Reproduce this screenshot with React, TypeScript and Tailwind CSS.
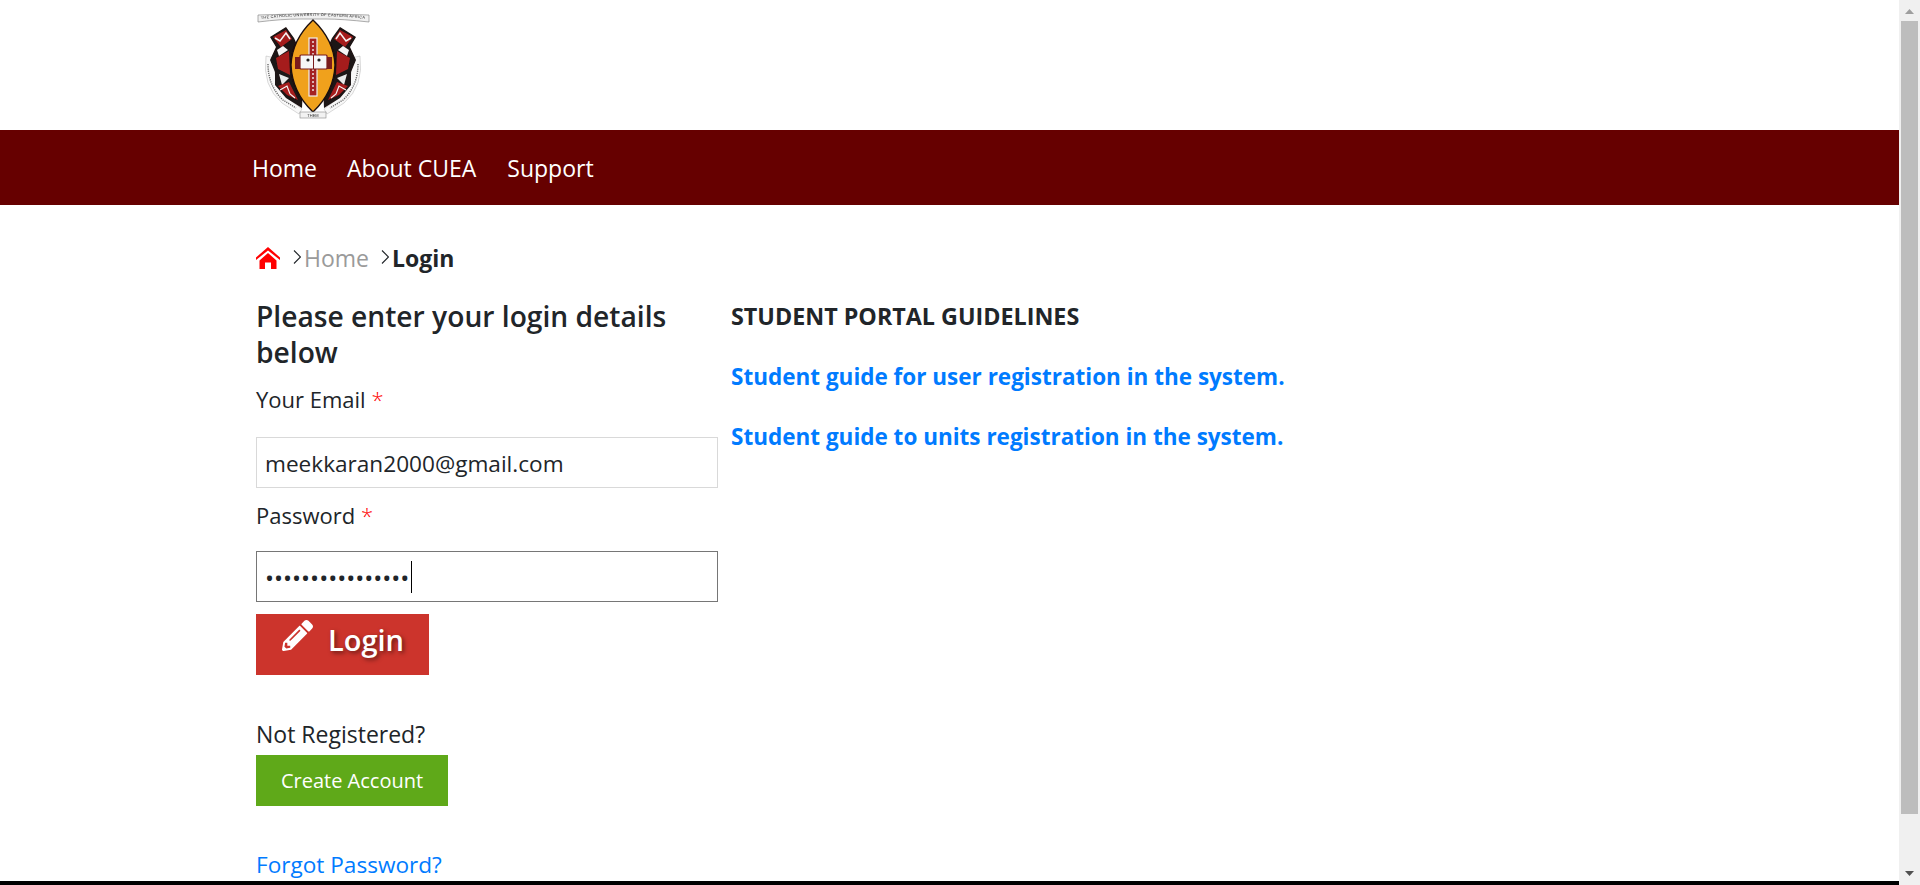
import { FaPencilAlt } from "react-icons/fa";

const font = "font-['Open_Sans','Noto_Sans',sans-serif]";

function LogoWing() {
    return (
        <g>
            <path d="M24 56 Q20 86 40 103 L57 114 L60 109 L44 97 Q30 84 33 58 Z" fill="#f8f8f8" stroke="#b4b4b4" strokeWidth="0.5" />
            <path d="M26 64 Q26 86 41 100 L54 108" fill="none" stroke="#666" strokeWidth="1.4" strokeDasharray="1.2 1" />
            <path d="M52 38 L44 27 L28 37 L34 47 L28 60 L33 72 L33 85 L44 98 L60 108 L62 60 Z" fill="#1c1212" />
            <path d="M31 37 L44 30 L50 39 L39 47 Z" fill="#a51e1e" />
            <path d="M33 38 L38 41 L44 33 L48 39" fill="none" stroke="#f5f5f5" strokeWidth="1.5" />
            <path d="M35 50 L41 46 L46 50 L37 56 Z" fill="#f5f5f5" />
            <path d="M34 58 L47 51 L48 75 L36 69 Z" fill="#a51e1e" />
            <path d="M37 74 L47 78 L40 85 Z" fill="#e8e8e8" />
            <path d="M36 86 L47 82 L56 100 L45 95 Z" fill="#a51e1e" />
            <path d="M38 90 L45 86 L48 94 L53 98" fill="none" stroke="#f5f5f5" strokeWidth="1.2" />
        </g>
    );
}

function Logo() {
    return (
        <svg viewBox="14 10 116 112" className="w-[116px] h-[112px] block">
            <defs>
                <filter id="soft"><feGaussianBlur stdDeviation="0.4" /></filter>
                <path id="arc" d="M19 19 Q71 13 125 19" />
            </defs>
            <g filter="url(#soft)">
                <path d="M16 15 Q71 12 127 15 L127 22 Q100 19 84 19 L58 19 Q40 19 16 22 Z" fill="#f0f0f0" stroke="#8a8a8a" strokeWidth="0.7" />
                <text fontSize="3.8" fill="#222" fontFamily="Liberation Sans" textLength="104"><textPath href="#arc">THE CATHOLIC UNIVERSITY OF EASTERN AFRICA</textPath></text>
                <LogoWing />
                <g transform="translate(142 0) scale(-1 1)"><LogoWing /></g>
                <path d="M71 20 Q92 40 93 65 Q92 92 71 112 Q50 92 49 65 Q50 40 71 20 Z" fill="#f0a11c" stroke="#1a1010" strokeWidth="1.4" />
                <rect x="67" y="38" width="8" height="58" fill="#a52222" stroke="#efefef" strokeWidth="1.2" />
                <path d="M71 41 L71 93" stroke="#efefef" strokeWidth="1.4" strokeDasharray="2 2" />
                <rect x="58" y="55" width="27" height="14" rx="1" fill="#f7f7f7" stroke="#7a1a1a" strokeWidth="1.2" />
                <path d="M71.5 55 L71.5 69" stroke="#7a1a1a" strokeWidth="1" />
                <rect x="53" y="57" width="5" height="12" fill="#7a1a1a" />
                <rect x="85" y="57" width="5" height="12" fill="#7a1a1a" />
                <circle cx="66" cy="60" r="1.6" fill="#222" />
                <circle cx="77" cy="60" r="1.6" fill="#222" />
                <rect x="58" y="112" width="26" height="6" fill="#f2f2f2" stroke="#888" strokeWidth="0.6" />
                <text x="71" y="117" textAnchor="middle" fontSize="4" fill="#333" fontFamily="Liberation Sans">THEM</text>
            </g>
        </svg>
    );
}

function HomeIcon() {
    return (
        <svg viewBox="0 0 24 22" className="w-[24px] h-[22px] mr-[13px]" fill="#ff0000">
            <path d="M12 0 L24 10.5 L24 13 L12 3.5 L0 13 L0 10.5 Z" />
            <path d="M3.5 13.5 L12 6 L20.5 13.5 L20.5 22 L15 22 L15 15.5 L9 15.5 L9 22 L3.5 22 Z" />
        </svg>
    );
}

function Chevron() {
    return (
        <svg viewBox="0 0 8 14" className="w-[8px] h-[14px] -mt-[3px] mr-[3px]" fill="none" stroke="#212529" strokeWidth="1.1">
            <path d="M1 0.5 L7.5 7 L1 13.5" />
        </svg>
    );
}

export default function App() {
    return (
        <div className={`flex w-full h-[885px] overflow-hidden bg-white text-[#212529] ${font}`}>
            <div className="flex-1 min-w-0 flex flex-col">
                <div className="flex-1 min-h-0 overflow-hidden">
                    <header className="h-[130px] pl-[256px] pt-[10px]">
                        <Logo />
                    </header>
                    <nav className="h-[75px] bg-[#660000] pl-[252px] pt-[2px] flex items-center gap-[30px] text-[23px] text-white">
                        <a>Home</a>
                        <a>About CUEA</a>
                        <a className="ml-[1px]">Support</a>
                    </nav>
                    <main className="pl-[256px] pt-[39px]">
                        <div className="flex items-center h-[28px] text-[23px] leading-none">
                            <HomeIcon />
                            <Chevron />
                            <span className="text-[#9a9a9a] mr-[12px]">Home</span>
                            <Chevron />
                            <span className="font-bold">Login</span>
                        </div>
                        <div className="flex gap-[13px] mt-[27px]">
                            <form className="w-[462px]">
                                <h3 className="-mt-[1px] text-[28.2px] leading-[36px] font-semibold">Please enter your login details below</h3>
                                <label className="block mt-[14px] h-[53px] text-[22px] leading-[30px]">Your Email <span className="text-[#ff0000] font-light">*</span></label>
                                <input
                                    readOnly
                                    value="meekkaran2000@gmail.com"
                                    className="block w-full h-[51px] border border-[#d9d9d9] px-[8px] pt-[2px] text-[22.6px] outline-none"
                                />
                                <label className="block mt-[12px] h-[51px] text-[22px] leading-[30px]">Password <span className="text-[#ff0000] font-light">*</span></label>
                                <div className="relative">
                                    <input
                                        readOnly
                                        type="password"
                                        value="aaaaaaaaaaaaaaaa"
                                        className="block w-full h-[51px] border border-[#767676] px-[8px] pt-[2px] text-[24px] outline-none"
                                    />
                                    <span className="absolute left-[155px] top-[10px] w-px h-[32px] bg-black" />
                                </div>
                                <button type="button" className="mt-[12px] w-[173px] h-[61px] pb-[10px] pl-[1px] bg-[#cc342c] text-white flex items-center justify-center gap-[15px] text-[29px] font-semibold [text-shadow:2px_2px_4px_rgba(0,0,0,0.5)]">
                                    <FaPencilAlt className="w-[31px] h-[31px] -mt-[8px]" />
                                    <span>Login</span>
                                </button>
                                <p className="mt-[44px] text-[23px] leading-[30px]">Not Registered?</p>
                                <button type="button" className="mt-[6px] block w-[192px] h-[51px] bg-[#5fa919] text-white text-[20px]">Create Account</button>
                                <a className="block mt-[44px] text-[22.6px] leading-[30px] text-[#007bff]">Forgot Password?</a>
                            </form>
                            <div className="pt-[2px]">
                                <h4 className="text-[23.3px] leading-[30px] font-bold">STUDENT PORTAL GUIDELINES</h4>
                                <a className="block mt-[31px] text-[22.5px] leading-[30px] font-bold text-[#007bff]">Student guide for user registration in the system.</a>
                                <a className="block mt-[30px] text-[22.5px] leading-[30px] font-bold text-[#007bff]">Student guide to units registration in the system.</a>
                            </div>
                        </div>
                    </main>
                </div>
                <div className="h-[4px] bg-black" />
            </div>
            <aside className="w-[21px] bg-[#f0f0f0] flex flex-col items-center">
                <svg viewBox="0 0 9 5" className="w-[9px] h-[5px] mt-[9px]"><path d="M4.5 0 L9 5 L0 5 Z" fill="#9e9e9e" /></svg>
                <div className="w-[17px] h-[793px] bg-[#bdbdbd] mt-[7px]" />
                <div className="flex-1" />
                <svg viewBox="0 0 9 5" className="w-[9px] h-[5px] mb-[9px]"><path d="M0 0 L9 0 L4.5 5 Z" fill="#505050" /></svg>
            </aside>
        </div>
    );
}
